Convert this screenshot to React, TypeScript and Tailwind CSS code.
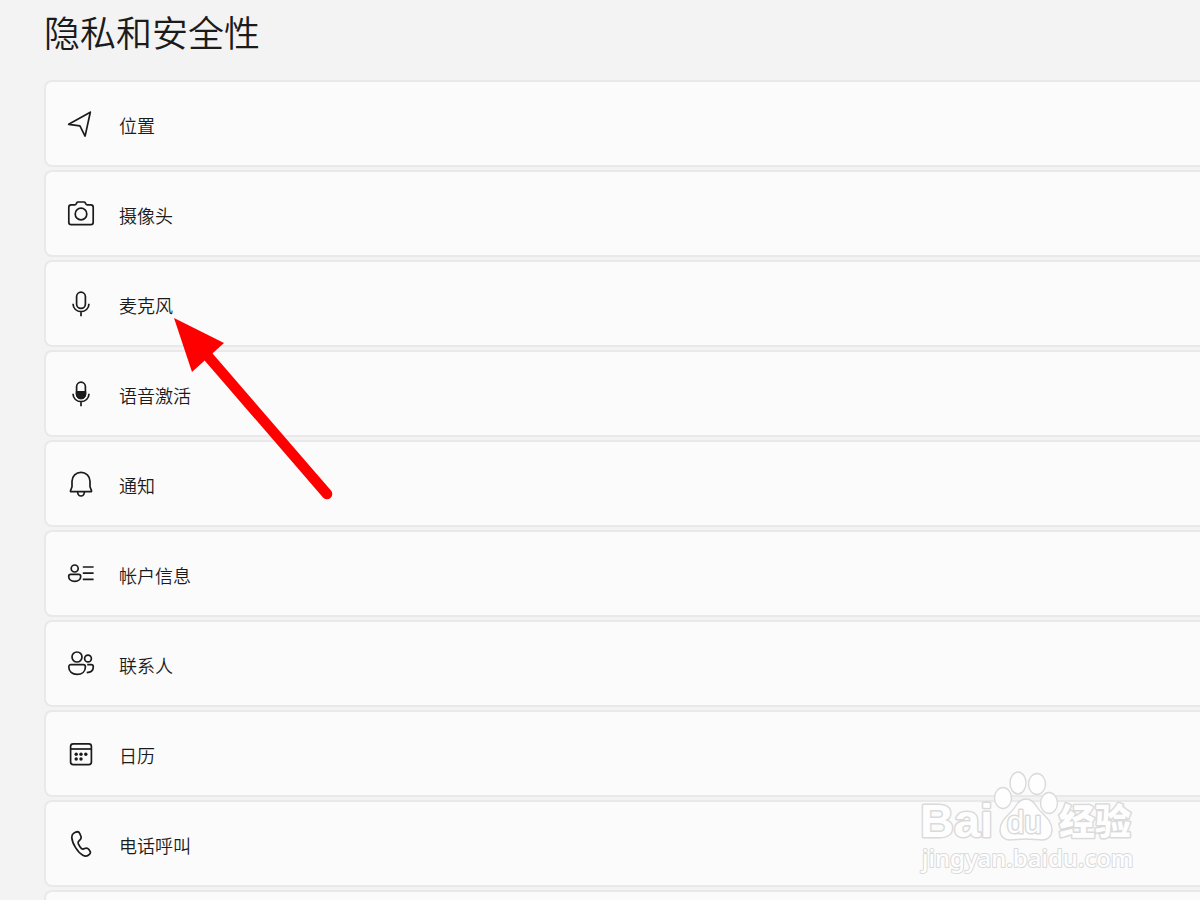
import type { ReactNode } from "react";

type PrivacyItem = {
  id: string;
  label: string;
  icon: ReactNode;
};

// -----------------------------
// ROWS (icons share a 28x28 box)
// -----------------------------
const items: PrivacyItem[] = [
  {
    id: "location",
    label: "位置",
    icon: <path d="M23.3 2.2 1.7 14.3l11.2 1.6 5.2 10.2Z" />,
  },
  {
    id: "camera",
    label: "摄像头",
    icon: (
      <>
        <path d="M4.2 4.8h3.6c.7 0 1.1-.3 1.4-.9l.5-1.1c.3-.6.7-.8 1.3-.8h6c.6 0 1 .2 1.3.8l.5 1.1c.3.6.7.9 1.4.9h3.6c1.4 0 2.4 1 2.4 2.4v15c0 1.4-1 2.4-2.4 2.4H4.2c-1.4 0-2.4-1-2.4-2.4v-15c0-1.4 1-2.4 2.4-2.4Z" />
        <circle cx="14" cy="14" r="5.8" />
      </>
    ),
  },
  {
    id: "microphone",
    label: "麦克风",
    icon: (
      <>
        <rect x="9.6" y="2.2" width="8.8" height="16.2" rx="4.4" />
        <path d="M6.1 13.8v.4a7.9 7.5 0 0 0 15.8 0v-.4M14 21.8v4.4" />
      </>
    ),
  },
  {
    id: "voice",
    label: "语音激活",
    icon: (
      <>
        <rect x="9.6" y="2.2" width="8.8" height="16.2" rx="4.4" />
        <path d="M9.6 11.8h8.8v2.2a4.4 4.4 0 0 1-8.8 0Z" fill="currentColor" />
        <path d="M6.1 13.8v.4a7.9 7.5 0 0 0 15.8 0v-.4M14 21.8v4.4" />
      </>
    ),
  },
  {
    id: "notifications",
    label: "通知",
    icon: (
      <>
        <path d="M14 2.3c-5 0-9 4-9 9v5.4l-1.5 4c-.2.6.1 1 .7 1h19.6c.6 0 .9-.4.7-1l-1.5-4v-5.4c0-5-4-9-9-9Z" />
        <path d="M10.6 22c.2 2.4 1.5 4 3.4 4s3.2-1.6 3.4-4" />
      </>
    ),
  },
  {
    id: "account",
    label: "帐户信息",
    icon: (
      <>
        <circle cx="7.7" cy="8.5" r="3.5" />
        <path d="M3.7 14.4h8c1.2 0 2 .8 2 2 0 2.8-2.3 4.9-6 4.9s-6-2.1-6-4.9c0-1.2.8-2 2-2ZM15.8 7h10.8M15.8 13.2h10.8M15.8 19.4h10.8" />
      </>
    ),
  },
  {
    id: "contacts",
    label: "联系人",
    icon: (
      <>
        <circle cx="10" cy="7" r="5" />
        <path d="M3.9 14.7h12.4c1.3 0 2.1.8 2.1 2.2 0 4.6-3.4 7.5-8.3 7.5s-8.3-2.9-8.3-7.5c0-1.4.8-2.2 2.1-2.2Z" />
        <circle cx="21" cy="8.5" r="3.4" />
        <path d="M20.2 14.7h3.9c1.4 0 2.2.8 2.2 2.1 0 3.6-2.6 5.7-6.6 5.8" />
      </>
    ),
  },
  {
    id: "calendar",
    label: "日历",
    icon: (
      <>
        <rect x="3.6" y="3.8" width="20.8" height="20.8" rx="2.6" />
        <path d="M3.6 9h20.8" />
        <g fill="currentColor" stroke="none">
          <circle cx="9.2" cy="14.3" r="1.7" />
          <circle cx="14" cy="14.3" r="1.7" />
          <circle cx="18.8" cy="14.3" r="1.7" />
          <circle cx="9.2" cy="19" r="1.7" />
          <circle cx="14" cy="19" r="1.7" />
        </g>
      </>
    ),
  },
  {
    id: "calls",
    label: "电话呼叫",
    icon: (
      <path d="m7 3 1.9-.9c1.6-.7 3.2 0 3.9 1.5l1.1 2.7c.5 1.3.2 2.5-.7 3.4l-1.6 1.6c-.6.6-.6 1.5-.1 2.8.7 1.6 1.6 3 2.8 4.2.7.7 1.4.9 2.2.6l2.1-.7c1.2-.4 2.3 0 3.1 1.1l1.2 1.7c.8 1.2.6 2.4-.5 3.4-1.6 1.6-4.3 2-6.6.8C10.8 22.5 5.2 13.5 4.8 7.6 4.7 5.5 5.3 3.9 7 3Z" />
    ),
  },
];

function PrivacyRow({ item }: { item: PrivacyItem }) {
  return (
    <a
      href={`#${item.id}`}
      className="flex h-[87px] items-center gap-6 rounded-l-lg border-2 border-r-0 border-[#e9e9e9] bg-[#fbfbfb] pl-[21px]"
    >
      <svg
        viewBox="0 0 28 28"
        className="size-7 shrink-0"
        fill="none"
        stroke="currentColor"
        strokeWidth="1.7"
        strokeLinejoin="round"
        aria-hidden="true"
      >
        {item.icon}
      </svg>
      <span className="pt-0.5 text-[18px] leading-6">{item.label}</span>
    </a>
  );
}

function PointerArrow() {
  return (
    <svg
      className="pointer-events-none absolute top-[310px] left-[170px] h-[200px] w-[170px]"
      viewBox="0 0 170 200"
      aria-hidden="true"
    >
      <path d="M36 44 157 184" stroke="#f00" strokeWidth="10.5" strokeLinecap="round" />
      <path d="M4 8 54 33 22 62Z" fill="#f00" />
    </svg>
  );
}

function Watermark() {
  return (
    <svg
      className="pointer-events-none absolute right-[56px] bottom-[20px] h-[114px] w-[228px]"
      viewBox="0 0 228 114"
      fill="#fefefe"
      stroke="#dadada"
      strokeWidth="1.4"
      strokeLinejoin="round"
      aria-hidden="true"
    >
      <g strokeWidth="3" paintOrder="stroke">
        <text x="4" y="71" className="font-['Liberation_Sans'] text-[47px] font-bold">
          Bai
        </text>
        <text x="143" y="69" className="font-['Noto_Sans_CJK_SC'] text-[36px] font-black">
          经验
        </text>
      </g>
      {/* PAW */}
      <ellipse cx="102" cy="17" rx="8" ry="11" />
      <ellipse cx="121" cy="18" rx="8.5" ry="10.5" />
      <ellipse cx="87" cy="32" rx="8.5" ry="10.5" />
      <ellipse cx="133" cy="37" rx="8.5" ry="10.5" />
      <path d="M110 33c-5 0-8 3-11 8-4 7-15 12-15 23 0 6 4 10 10 10 5 0 10-1 16-1s11 1 16 1c6 0 10-4 10-10 0-11-10-15-15-23-3-5-6-8-11-8Z" />
      <text
        x="91"
        y="67"
        strokeWidth="3"
        paintOrder="stroke"
        className="font-['Liberation_Sans'] text-[31px]"
      >
        du
      </text>
      <text
        x="6"
        y="101"
        strokeWidth="2"
        paintOrder="stroke"
        className="font-['Noto_Sans'] text-[24px] font-medium"
      >
        jingyan.baidu.com
      </text>
    </svg>
  );
}

export default function App() {
  return (
    <main className="relative flex min-h-screen flex-col overflow-hidden bg-[#f3f3f3] pl-11 font-['Noto_Sans_CJK_SC',sans-serif] font-[350] text-[#1b1b1b]">
      <h1 className="h-20 pt-1.5 text-[36px] leading-[50px]">隐私和安全性</h1>

      <nav aria-label="隐私和安全性" className="flex flex-1 flex-col gap-[3px]">
        {items.map((item) => (
          <PrivacyRow key={item.id} item={item} />
        ))}
        {/* list continues below the fold */}
        <div className="flex-1 rounded-tl-lg border-t-2 border-l-2 border-[#e9e9e9] bg-[#fbfbfb]" />
      </nav>

      <PointerArrow />
      <Watermark />
    </main>
  );
}
